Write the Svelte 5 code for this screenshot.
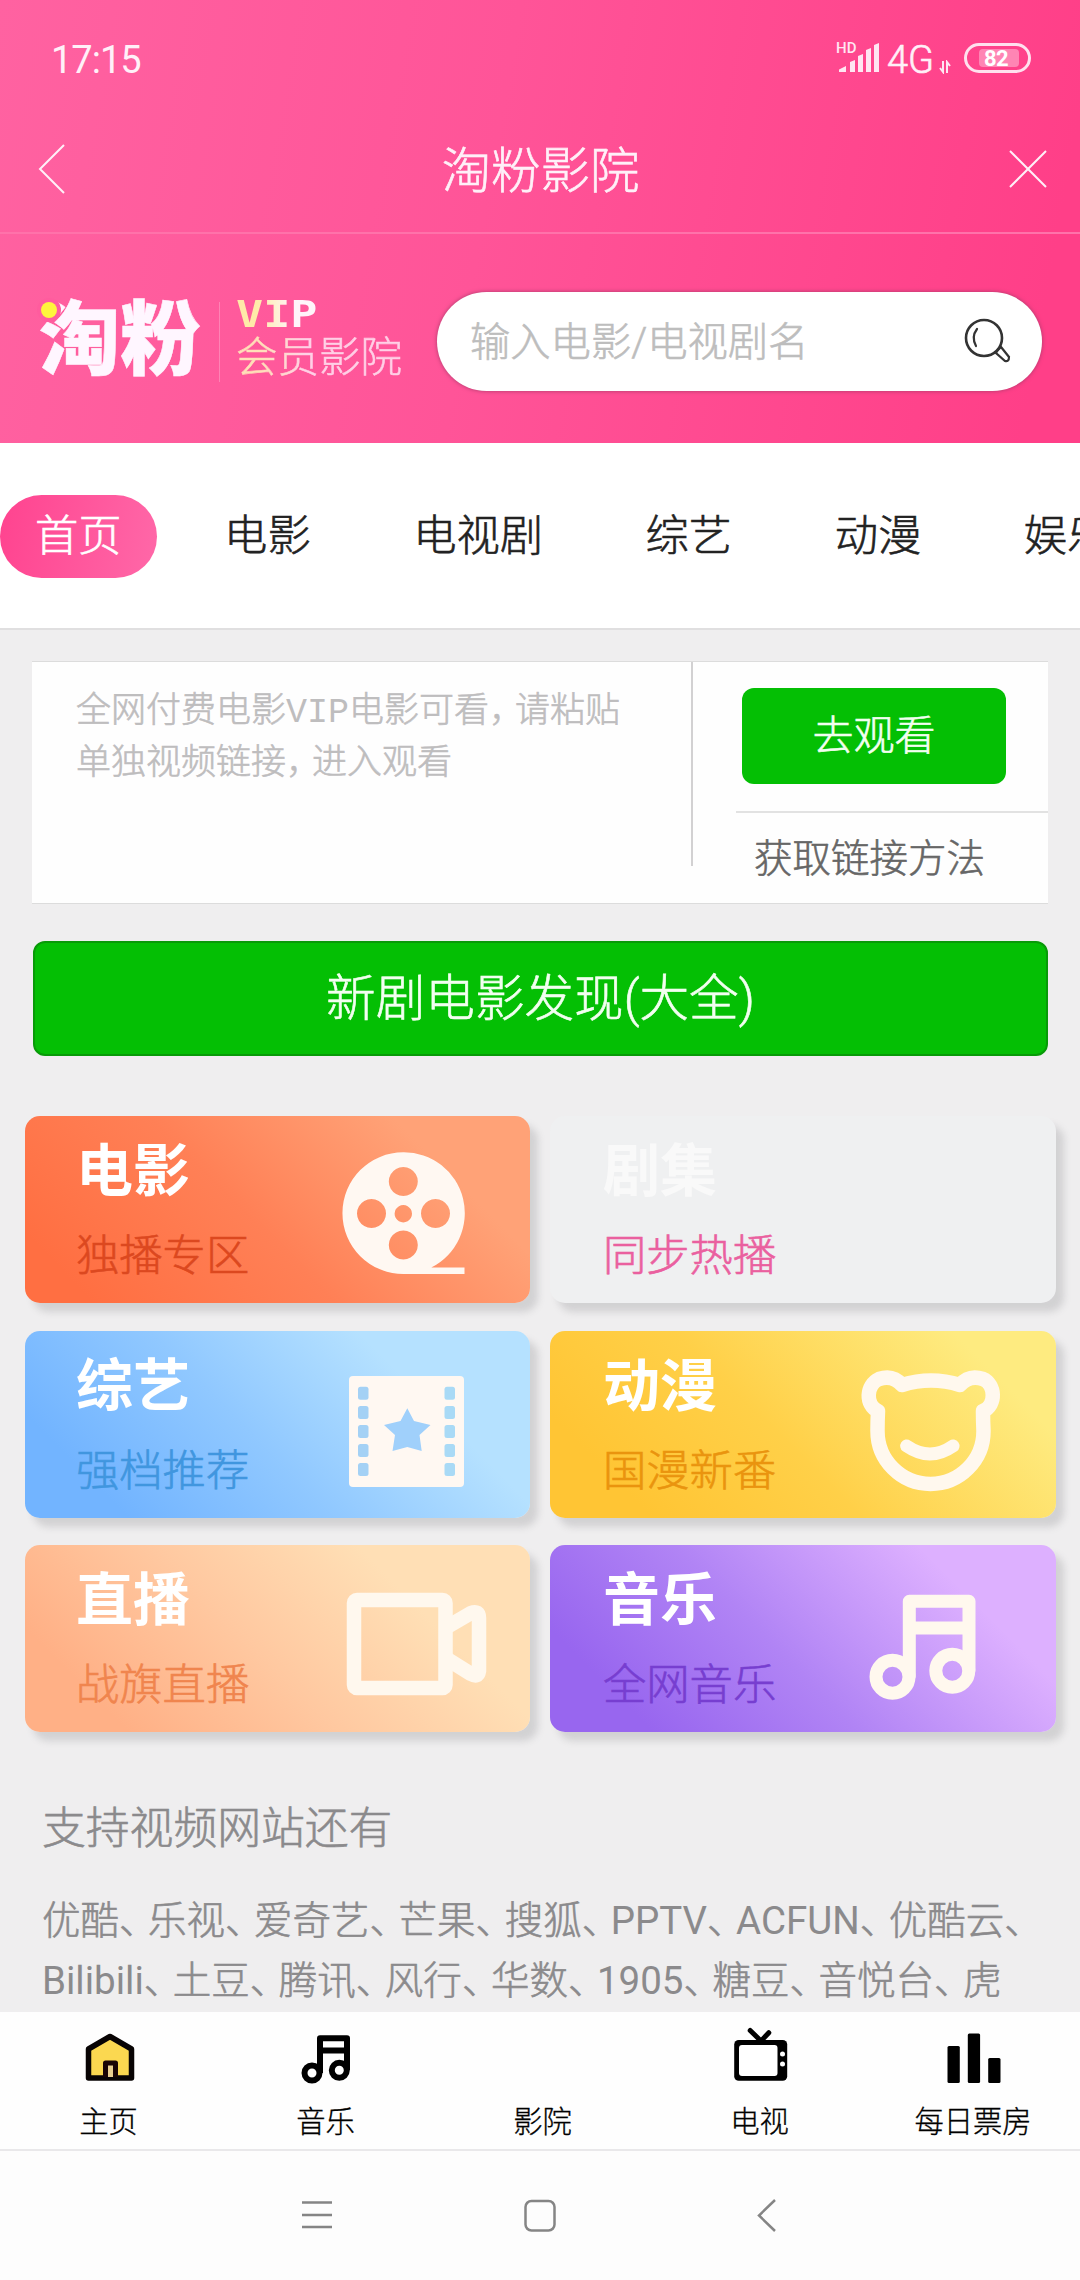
<script lang="ts">
    let activeTab = '首页';
    let keyword = '';

    const tabs = ['首页', '电影', '电视剧', '综艺', '动漫', '娱乐'];

    const cards = [
        { id: 'movie', title: '电影', sub: '独播专区' },
        { id: 'series', title: '剧集', sub: '同步热播' },
        { id: 'variety', title: '综艺', sub: '强档推荐' },
        { id: 'anime', title: '动漫', sub: '国漫新番' },
        { id: 'live', title: '直播', sub: '战旗直播' },
        { id: 'music', title: '音乐', sub: '全网音乐' }
    ];

    const siteRows = [
        ['优酷', '乐视', '爱奇艺', '芒果', '搜狐', 'PPTV', 'ACFUN', '优酷云', ''],
        ['Bilibili', '土豆', '腾讯', '风行', '华数', '1905', '糖豆', '音悦台', '虎']
    ];

    const navItems = [
        { id: 'home', label: '主页' },
        { id: 'music', label: '音乐' },
        { id: 'cinema', label: '影院' },
        { id: 'tv', label: '电视' },
        { id: 'rank', label: '每日票房' }
    ];

    const filmHoles = [55.7, 75, 94, 113, 132];

    const isLatin = (text: string) => /^[\w]+$/.test(text);
</script>

<div class="screen">
    <header>
        <div class="status">
            <span class="time">17:15</span>
            <div class="status-icons">
                <svg class="signal" width="42" height="34" viewBox="0 0 42 34">
                    <text x="-2" y="13" font-size="15" font-weight="500" fill="#ffe6f2">HD</text>
                    <path d="M1 32V29.500L8 26V32ZM12 32V22L17 20V32ZM20 32V16L25 14V32ZM28 32V10L33 8V32ZM36 32V5L41 3V32Z" fill="#ffe6f2" />
                </svg>
                <span class="net">4G</span>
                <svg width="14" height="14" viewBox="0 0 14 14" fill="none" stroke="#ffe6f2" stroke-width="2">
                    <path d="M5 1V12L2 8M9 13V2L12 6" />
                </svg>
                <span class="battery"><i>82</i></span>
            </div>
        </div>

        <div class="titlebar">
            <svg width="30" height="52" viewBox="0 0 30 52"><path d="M27 2L3 26L27 50" /></svg>
            <h1>淘粉影院</h1>
            <svg width="40" height="40" viewBox="0 0 40 40"><path d="M2 2L38 38M38 2L2 38" /></svg>
        </div>

        <div class="searchbar">
            <div class="logo">淘粉<span class="dot"></span></div>
            <div class="slogan">
                <b>VIP</b>
                <span>会员影院</span>
            </div>
            <div class="search">
                <input type="text" placeholder="输入电影/电视剧名" bind:value={keyword} />
                <svg width="50" height="50" viewBox="0 0 50 50" fill="none" stroke="#333" stroke-width="2.600">
                    <circle cx="21" cy="21" r="18" />
                    <path d="M14 12Q8 20 13 29M35 33L38 30L46 40Q46 45 42 44L33 36Z" stroke-width="2.200" stroke-linecap="round" />
                </svg>
            </div>
        </div>
    </header>

    <nav class="tabs">
        {#each tabs as tab}
            <button class:active={tab === activeTab} on:click={() => (activeTab = tab)}>{tab}</button>
        {/each}
    </nav>

    <main>
        <section class="panel">
            <div class="paste">
                全网付费电影<span class="mono">VIP</span>电影可看<span class="tight">，</span>请粘贴<br />
                单独视频链接<span class="tight">，</span>进入观看
            </div>
            <div class="actions">
                <button class="go">去观看</button>
                <div class="how">获取链接方法</div>
            </div>
        </section>

        <button class="discover">新剧电影发现(大全)</button>

        <section class="cards">
            {#each cards as card}
                <div class="card {card.id}">
                    <div class="card-text">
                        <h2>{card.title}</h2>
                        <p>{card.sub}</p>
                    </div>
                    <svg width="200" height="187" viewBox="0 0 200 187">
                        {#if card.id === 'movie'}
                            <path
                                fill="#fff8f2"
                                fill-rule="evenodd"
                                d="M73.300 36.300A60.850 60.850 0 0 1 101.300 151.500H134.500V158H73.300A60.850 60.850 0 0 1 73.300 36.300ZM73.300 51a14.500 14.500 0 1 0 .01 0ZM73.300 114.500a14.500 14.500 0 1 0 .01 0ZM41.500 83a14.500 14.500 0 1 0 .01 0ZM105.500 83a14.500 14.500 0 1 0 .01 0ZM73.300 89a8.700 8.700 0 1 0 .01 0Z"
                            />
                        {:else if card.id === 'variety'}
                            <rect x="19" y="45" width="115" height="111" rx="4" fill="#fff8f2" />
                            {#each filmHoles as y}
                                <rect x="28" {y} width="10.500" height="13" rx="2.500" fill="#a4d1f5" />
                                <rect x="114.500" {y} width="10.500" height="13" rx="2.500" fill="#a9daf6" />
                            {/each}
                            <path d="M77.300 77.300L84 90L100.500 94L89.500 104L91.700 120L77.300 116L62.500 120L65 104L54 94L70.500 90Z" fill="#a0d0fb" />
                        {:else if card.id === 'anime'}
                            <g class="line">
                                <path d="M22 80C9 74 10 54 23 48C32 45 40 47 46 54Q75 45 104 54C110 47 118 45 127 48C139 53 141 74 127 80Q127 90 127.500 100A53 53 0 0 1 21.500 100Q21.500 90 22 80Z" />
                                <path d="M50.700 115Q74 131 97 115" stroke-width="13" />
                            </g>
                        {:else if card.id === 'live'}
                            <g class="line">
                                <rect x="24" y="55" width="91.500" height="88" rx="3" />
                                <path d="M117 82L141 68Q149 65 149 73V126Q148 133 141 129L117 114" />
                            </g>
                        {:else if card.id === 'music'}
                            <g class="line note">
                                <circle cx="36.500" cy="131.700" r="16.500" />
                                <circle cx="96.300" cy="125.700" r="16.500" />
                                <path d="M53.300 131V56.300H113V125M53.300 83H113" />
                            </g>
                        {/if}
                    </svg>
                </div>
            {/each}
        </section>

        <section class="sites">
            <h3>支持视频网站还有</h3>
            {#each siteRows as row}
                <p>
                    {#each row as site, i}<span class:latin={isLatin(site)}>{site}</span>{#if i < row.length - 1}<span class="sep">、</span>{/if}{/each}
                </p>
            {/each}
        </section>
    </main>

    <nav class="bottom">
        {#each navItems as item}
            <div class="item">
                <svg width="64" height="60" viewBox="0 0 64 60">
                    {#if item.id === 'home'}
                        <path d="M11.500 23L33 10.500L54.500 23V52H11.500Z" fill="#fbd850" stroke="#080404" stroke-width="5.500" stroke-linejoin="round" />
                        <path d="M28.500 51V37H38.500V51" fill="#e8cf90" stroke="#1a0505" stroke-width="5" stroke-linejoin="round" />
                    {:else if item.id === 'music'}
                        <g fill="none" stroke="#000" stroke-width="6" stroke-linejoin="round">
                            <circle cx="18" cy="47" r="7.500" />
                            <circle cx="45.300" cy="44.300" r="7.500" />
                            <path d="M26 47V12.300H53V44M26 24.500H53" />
                        </g>
                    {:else if item.id === 'tv'}
                        <rect x="6.200" y="14" width="53" height="40.700" rx="4.500" />
                        <rect x="11" y="19" width="38.500" height="31" rx="3" fill="#fff" />
                        <circle cx="54.500" cy="28" r="2.500" fill="#fff" />
                        <circle cx="54.500" cy="38" r="2.500" fill="#fff" />
                        <path d="M22.200 4.500L33 15L40.800 6.700" fill="none" stroke="#000" stroke-width="5" stroke-linecap="round" />
                    {:else if item.id === 'rank'}
                        <rect x="6.500" y="20" width="12.300" height="37" rx="1.500" />
                        <rect x="26.800" y="7.500" width="12.300" height="49.500" rx="1.500" />
                        <rect x="47.200" y="32" width="12.300" height="25" rx="1.500" />
                    {/if}
                </svg>
                <span>{item.label}</span>
            </div>
        {/each}
    </nav>

    <div class="system">
        <svg width="32" height="34" viewBox="0 0 32 34"><path d="M1 3.500H31M1 16H31M1 28H31" /></svg>
        <svg width="34" height="34" viewBox="0 0 34 34"><rect x="2.500" y="2" width="29" height="29.500" rx="6" /></svg>
        <svg width="20" height="34" viewBox="0 0 20 34"><path d="M18 1L2 16.500L18 32" /></svg>
    </div>
</div>

<style>
    :global(body) {
        margin: 0;
        background: #fdfdfd;
    }

    .screen {
        display: flex;
        flex-direction: column;
        width: 1080px;
        height: 2280px;
        overflow: hidden;
        background: #fdfdfd;
        color: #222;
        font-family: Roboto, "Noto Sans CJK SC", sans-serif;
        font-weight: 300;
        -webkit-text-stroke: 0.6px currentColor;
    }

    h1, h2, h3, p {
        margin: 0;
        font-weight: 300;
    }

    button {
        border: none;
        padding: 0;
        background: none;
        color: inherit;
        font: inherit;
    }

    svg {
        display: block;
        flex: none;
    }

    header {
        flex: none;
        height: 443px;
        background: linear-gradient(100deg, #ff62a1 0%, #ff5498 45%, #ff3f88 95%);
        color: #fff0f8;
    }

    .status {
        display: flex;
        justify-content: space-between;
        height: 120px;
        padding: 0 49px 0 51px;
        line-height: 120px;
    }

    .time {
        font-size: 38px;
        font-weight: 400;
        letter-spacing: -1px;
        -webkit-text-stroke: 0;
    }

    .status-icons {
        display: flex;
        align-items: center;
    }

    .signal {
        margin: -6px 7px 0 0;
        overflow: visible;
    }

    .net {
        font-size: 38px;
        margin-right: 4px;
    }

    .status-icons svg:nth-of-type(2) {
        margin-top: 14px;
    }

    .battery {
        box-sizing: border-box;
        width: 67px;
        height: 30px;
        margin: -4px 0 0 12px;
        padding: 3px 9px 3px 12px;
        border: 3px solid #ffe0ee;
        border-radius: 15px;
    }

    .battery i {
        display: block;
        height: 18px;
        border-radius: 4px;
        background: #ff85b4;
        color: #fff;
        font: 700 22px/19px Roboto, sans-serif;
        letter-spacing: -0.5px;
        text-align: center;
        text-indent: -6px;
        -webkit-text-stroke: 0;
    }

    .titlebar {
        display: flex;
        align-items: center;
        justify-content: space-between;
        box-sizing: border-box;
        height: 114px;
        padding: 0 32px 14px 37px;
        border-bottom: 2px solid #ff72aa;
    }

    .titlebar svg {
        fill: none;
        stroke: #fff0f8;
        stroke-width: 2;
    }

    h1 {
        margin: 4px 0 0 6px;
        font-size: 49.4px;
        line-height: 90px;
    }

    .searchbar {
        display: flex;
        align-items: center;
        padding: 58px 38px 0 39px;
    }

    .logo {
        position: relative;
        width: 180px;
        height: 80px;
        border-right: 1px solid #ff83b5;
        font-size: 81px;
        font-weight: 900;
        line-height: 78px;
        color: #fff6ff;
        -webkit-text-stroke: 0.5px #fff6ff;
    }

    .dot {
        position: absolute;
        left: 2px;
        top: 0;
        width: 16px;
        height: 16px;
        border-radius: 50%;
        background: #fff53c;
        box-shadow: 0 0 0 4px #ff5c9e;
    }

    .slogan {
        display: flex;
        flex-direction: column;
        width: 201px;
        padding-left: 16px;
    }

    .slogan b {
        width: 68px;
        margin-top: -4px;
        background: linear-gradient(90deg, #ffeaa8 25%, #fff4fa 70%);
        background-clip: text;
        color: transparent;
        font: 700 37px/36px "DejaVu Sans Mono", monospace;
        -webkit-text-stroke: 0;
        transform: scaleX(1.22);
        transform-origin: left;
    }

    .slogan span {
        background: linear-gradient(90deg, #ffe0b8 12%, #ffd0e6 35%);
        background-clip: text;
        color: transparent;
        font-size: 41.5px;
        line-height: 50px;
        -webkit-text-stroke: 0.6px transparent;
    }

    .search {
        display: flex;
        flex: 1;
        align-items: center;
        justify-content: space-between;
        box-sizing: border-box;
        height: 99px;
        padding: 0 29px 0 33px;
        border-radius: 50px;
        background: #fff;
        box-shadow: 0 0 4px #a83a6a;
    }

    .search input {
        width: 400px;
        padding: 2px 0 0;
        border: none;
        outline: none;
        background: none;
        font: 300 40.3px/60px Roboto, "Noto Sans CJK SC", sans-serif;
    }

    .search input::placeholder {
        color: #bdbdbd;
    }

    .tabs {
        display: flex;
        flex: none;
        gap: 32.5px;
        box-sizing: border-box;
        height: 187px;
        padding-top: 52px;
        border-bottom: 2px solid #e0dfe0;
        background: #fff;
    }

    .tabs button {
        flex: none;
        height: 83px;
        padding: 0 35px;
        border-radius: 42px;
        color: #222;
        font-size: 43.3px;
        line-height: 80px;
    }

    .tabs .active {
        background: linear-gradient(100deg, #ff438f, #ff68a8);
        color: #fff;
    }

    main {
        flex: none;
        box-sizing: border-box;
        height: 1382px;
        overflow: hidden;
        padding-top: 31px;
        background: #efeeef;
    }

    .panel {
        display: flex;
        justify-content: space-between;
        box-sizing: border-box;
        height: 243px;
        margin: 0 32px;
        border-top: 1px solid #dcdcdc;
        border-bottom: 1px solid #dcdcdc;
        background: #fefefe;
    }

    .paste {
        box-sizing: border-box;
        width: 661px;
        height: 204px;
        padding: 24px 0 0 44px;
        border-right: 2px solid #d2d1d2;
        color: #bebdbe;
        font-size: 35px;
        line-height: 49px;
        white-space: nowrap;
    }

    .mono {
        font-family: "Liberation Mono", monospace;
        font-weight: 400;
        -webkit-text-stroke: 0;
    }

    .tight {
        letter-spacing: -9px;
    }

    .actions {
        width: 312px;
        padding-top: 26px;
    }

    .go {
        display: block;
        width: 264px;
        height: 96px;
        margin: 0 0 27px 6px;
        border-radius: 12px;
        background: #04bf04;
        color: #f2fff0;
        font-size: 41px;
        line-height: 90px;
    }

    .how {
        padding-left: 18px;
        border-top: 2px solid #e2e2e2;
        color: #666;
        font-size: 38.5px;
        line-height: 92px;
    }

    .discover {
        display: block;
        box-sizing: border-box;
        width: 1015px;
        height: 115px;
        margin: 37px 32px 60px 33px;
        border: 2px solid #089a08;
        border-radius: 12px;
        background: #04bf04;
        color: #f2fff0;
        font-size: 49.6px;
        line-height: 104px;
    }

    .cards {
        display: grid;
        grid-template-columns: 505px 506px;
        gap: 27.5px 20px;
        padding: 0 24px 0 25px;
    }

    .card {
        display: flex;
        justify-content: space-between;
        height: 187px;
        border-radius: 15px;
        box-shadow: 8px 9px 7px rgba(120, 120, 125, 0.24);
        overflow: hidden;
    }

    .card-text {
        padding: 16px 0 0 51px;
    }

    .card:nth-child(even) .card-text {
        padding-left: 53px;
    }

    h2 {
        color: #fff;
        font-size: 57px;
        font-weight: 700;
        line-height: 80px;
        -webkit-text-stroke: 0;
    }

    .card p {
        font-size: 43.3px;
        line-height: 90px;
    }

    .line {
        fill: none;
        stroke: #fff8ee;
        stroke-width: 14.5;
        stroke-linecap: round;
        stroke-linejoin: round;
    }

    .note {
        stroke-width: 13;
    }

    .movie {
        background: linear-gradient(45deg, #ff6f42 10%, #ff8056 45%, #ffa277 80%);
    }

    .movie p {
        color: #dc481f;
    }

    .series {
        background: #eff0f1;
    }

    .series h2 {
        color: #f9f9f9;
    }

    .series p {
        color: #ea609f;
    }

    .variety {
        background: linear-gradient(45deg, #72b4ff 15%, #90c8ff 45%, #b5e1ff 75%);
    }

    .variety p {
        color: #4096df;
    }

    .anime {
        background: linear-gradient(45deg, #ffc534 15%, #ffd048 45%, #feeb80 85%);
    }

    .anime p {
        color: #ea940e;
    }

    .live {
        background: linear-gradient(45deg, #ffb086 15%, #ffc8a0 45%, #ffdfb5 75%);
    }

    .live p {
        color: #f0854e;
    }

    .music {
        background: linear-gradient(45deg, #9866ef 15%, #b184f5 45%, #ddb0ff 80%);
    }

    .music p {
        color: #773ed0;
    }

    .sites {
        padding: 62px 0 0 42px;
        color: #8b8a8c;
        white-space: nowrap;
    }

    h3 {
        margin-bottom: 27px;
        font-size: 43.8px;
        line-height: 70px;
    }

    .sites p {
        font-size: 38.5px;
        line-height: 60px;
    }

    .latin {
        font-weight: 400;
        -webkit-text-stroke: 0;
    }

    .sep {
        letter-spacing: -9.5px;
    }

    .bottom {
        display: grid;
        flex: none;
        grid-template-columns: 217px 217px 217px 217px 210px;
        box-sizing: border-box;
        height: 139px;
        padding-top: 14px;
        border-bottom: 2px solid #e9e8ea;
        background: #fefefe;
    }

    .item {
        display: flex;
        flex-direction: column;
        align-items: center;
        gap: 12px;
        color: #000;
        font-size: 29.3px;
        line-height: 48px;
        -webkit-text-stroke: 0.3px #000;
    }

    .item svg {
        -webkit-text-stroke: 0;
    }

    .system {
        display: flex;
        align-items: center;
        height: 129px;
        padding-left: 301px;
    }

    .system svg {
        fill: none;
        stroke: #858585;
        stroke-width: 2.5;
    }

    .system svg:nth-child(2) {
        margin: 0 200px 0 190px;
    }
</style>
